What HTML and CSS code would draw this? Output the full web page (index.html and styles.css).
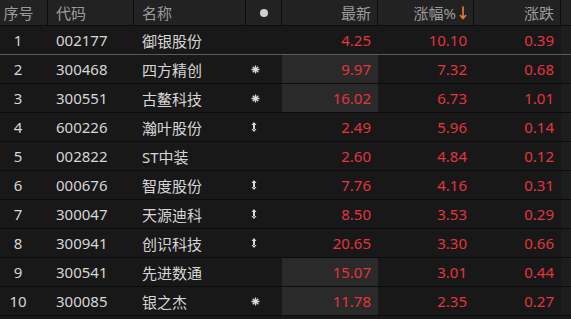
FILE: index.html
```html
<!DOCTYPE html>
<html>
<head>
<meta charset="utf-8">
<link rel="stylesheet" href="styles.css">
</head>
<body>
<div class="table">
  <div class="row head">
    <div class="c idx">序号</div>
    <div class="c code">代码</div>
    <div class="c name">名称</div>
    <div class="c ico"><span class="dot"></span></div>
    <div class="c num">最新</div>
    <div class="c num">涨幅%<svg class="arrow" width="8" height="15" viewBox="0 0 8 15"><path d="M4 1.5 V13 M1 10 L4 13.5 L7 10" stroke="#e8782a" stroke-width="1.7" fill="none"/></svg></div>
    <div class="c num">涨跌</div>
    <div class="c bar"></div>
  </div>

  <div class="row sel">
    <div class="c idx">1</div><div class="c code">002177</div><div class="c name">御银股份</div><div class="c ico"></div>
    <div class="c num red">4.25</div><div class="c num red">10.10</div><div class="c num red">0.39</div><div class="c bar"></div>
  </div>
  <div class="row">
    <div class="c idx">2</div><div class="c code">300468</div><div class="c name">四方精创</div><div class="c ico"><svg width="9" height="9" viewBox="0 0 9 9"><path d="M4.5 0.5V8.5M0.5 4.5H8.5M1.7 1.7L7.3 7.3M7.3 1.7L1.7 7.3" stroke="#d8d8d8" stroke-width="1.3"/></svg></div>
    <div class="c num red hl">9.97</div><div class="c num red">7.32</div><div class="c num red">0.68</div><div class="c bar"></div>
  </div>
  <div class="row">
    <div class="c idx">3</div><div class="c code">300551</div><div class="c name">古鳌科技</div><div class="c ico"><svg width="9" height="9" viewBox="0 0 9 9"><path d="M4.5 0.5V8.5M0.5 4.5H8.5M1.7 1.7L7.3 7.3M7.3 1.7L1.7 7.3" stroke="#d8d8d8" stroke-width="1.3"/></svg></div>
    <div class="c num red hl">16.02</div><div class="c num red">6.73</div><div class="c num red">1.01</div><div class="c bar"></div>
  </div>
  <div class="row">
    <div class="c idx">4</div><div class="c code">600226</div><div class="c name">瀚叶股份</div><div class="c ico"><svg width="6" height="10" viewBox="0 0 6 10"><path d="M3 0L5.5 3H0.5ZM3 10L5.5 7H0.5ZM2 2.5H4V7.5H2Z" fill="#d8d8d8"/></svg></div>
    <div class="c num red">2.49</div><div class="c num red">5.96</div><div class="c num red">0.14</div><div class="c bar"></div>
  </div>
  <div class="row">
    <div class="c idx">5</div><div class="c code">002822</div><div class="c name">ST中装</div><div class="c ico"></div>
    <div class="c num red">2.60</div><div class="c num red">4.84</div><div class="c num red">0.12</div><div class="c bar"></div>
  </div>
  <div class="row">
    <div class="c idx">6</div><div class="c code">000676</div><div class="c name">智度股份</div><div class="c ico"><svg width="6" height="10" viewBox="0 0 6 10"><path d="M3 0L5.5 3H0.5ZM3 10L5.5 7H0.5ZM2 2.5H4V7.5H2Z" fill="#d8d8d8"/></svg></div>
    <div class="c num red">7.76</div><div class="c num red">4.16</div><div class="c num red">0.31</div><div class="c bar"></div>
  </div>
  <div class="row">
    <div class="c idx">7</div><div class="c code">300047</div><div class="c name">天源迪科</div><div class="c ico"><svg width="6" height="10" viewBox="0 0 6 10"><path d="M3 0L5.5 3H0.5ZM3 10L5.5 7H0.5ZM2 2.5H4V7.5H2Z" fill="#d8d8d8"/></svg></div>
    <div class="c num red">8.50</div><div class="c num red">3.53</div><div class="c num red">0.29</div><div class="c bar"></div>
  </div>
  <div class="row">
    <div class="c idx">8</div><div class="c code">300941</div><div class="c name">创识科技</div><div class="c ico"><svg width="6" height="10" viewBox="0 0 6 10"><path d="M3 0L5.5 3H0.5ZM3 10L5.5 7H0.5ZM2 2.5H4V7.5H2Z" fill="#d8d8d8"/></svg></div>
    <div class="c num red">20.65</div><div class="c num red">3.30</div><div class="c num red">0.66</div><div class="c bar"></div>
  </div>
  <div class="row">
    <div class="c idx">9</div><div class="c code">300541</div><div class="c name">先进数通</div><div class="c ico"></div>
    <div class="c num red hl">15.07</div><div class="c num red">3.01</div><div class="c num red">0.44</div><div class="c bar"></div>
  </div>
  <div class="row">
    <div class="c idx">10</div><div class="c code">300085</div><div class="c name">银之杰</div><div class="c ico"><svg width="9" height="9" viewBox="0 0 9 9"><path d="M4.5 0.5V8.5M0.5 4.5H8.5M1.7 1.7L7.3 7.3M7.3 1.7L1.7 7.3" stroke="#d8d8d8" stroke-width="1.3"/></svg></div>
    <div class="c num red hl">11.78</div><div class="c num red">2.35</div><div class="c num red">0.27</div><div class="c bar"></div>
  </div>
</div>
</body>
</html>
```

FILE: styles.css
```css
html, body {
  margin: 0;
  padding: 0;
  background: #181818;
}
body {
  font-family: "Noto Sans", "Noto Sans CJK SC", sans-serif;
  font-size: 15px;
  color: #d6d6d6;
  width: 571px;
  height: 319px;
  overflow: hidden;
}
.table {
  display: flex;
  flex-direction: column;
}
.row {
  display: grid;
  grid-template-columns: 48px 86px 112px 36px 96px 96px 87px 10px;
  height: 29px;
  box-sizing: border-box;
  border-bottom: 1px solid #0c0c0c;
}
.row.sel {
  border-bottom: 1px solid #5a5a5a;
}
.row.head {
  height: 26px;
  background: #222222;
  color: #9c9c9c;
  border-bottom: 1px solid #0c0c0c;
}
.c {
  display: flex;
  align-items: center;
  box-sizing: border-box;
  white-space: nowrap;
}
.head .c {
  border-right: 1px solid #0c0c0c;
}
.idx {
  justify-content: center;
  padding-right: 12px;
}
.head .idx {
  padding-right: 10px;
}
.code {
  padding-left: 8px;
}
.name {
  padding-left: 8px;
}
.ico {
  padding-left: 5px;
}
.head .ico {
  justify-content: center;
  padding-left: 0;
}
.dot {
  width: 8px;
  height: 8px;
  border-radius: 50%;
  background: #cfcfcf;
}
.num {
  justify-content: flex-end;
  padding-right: 7px;
}
.head .num {
  padding-right: 6px;
}
.arrow {
  margin-left: 3px;
}
.red {
  color: #e3343f;
}
.hl {
  background: #2a2a2a;
}
.bar {
  background: #1d1d1d;
}
.head .bar {
  background: #222222;
  border-right: none;
}
```
